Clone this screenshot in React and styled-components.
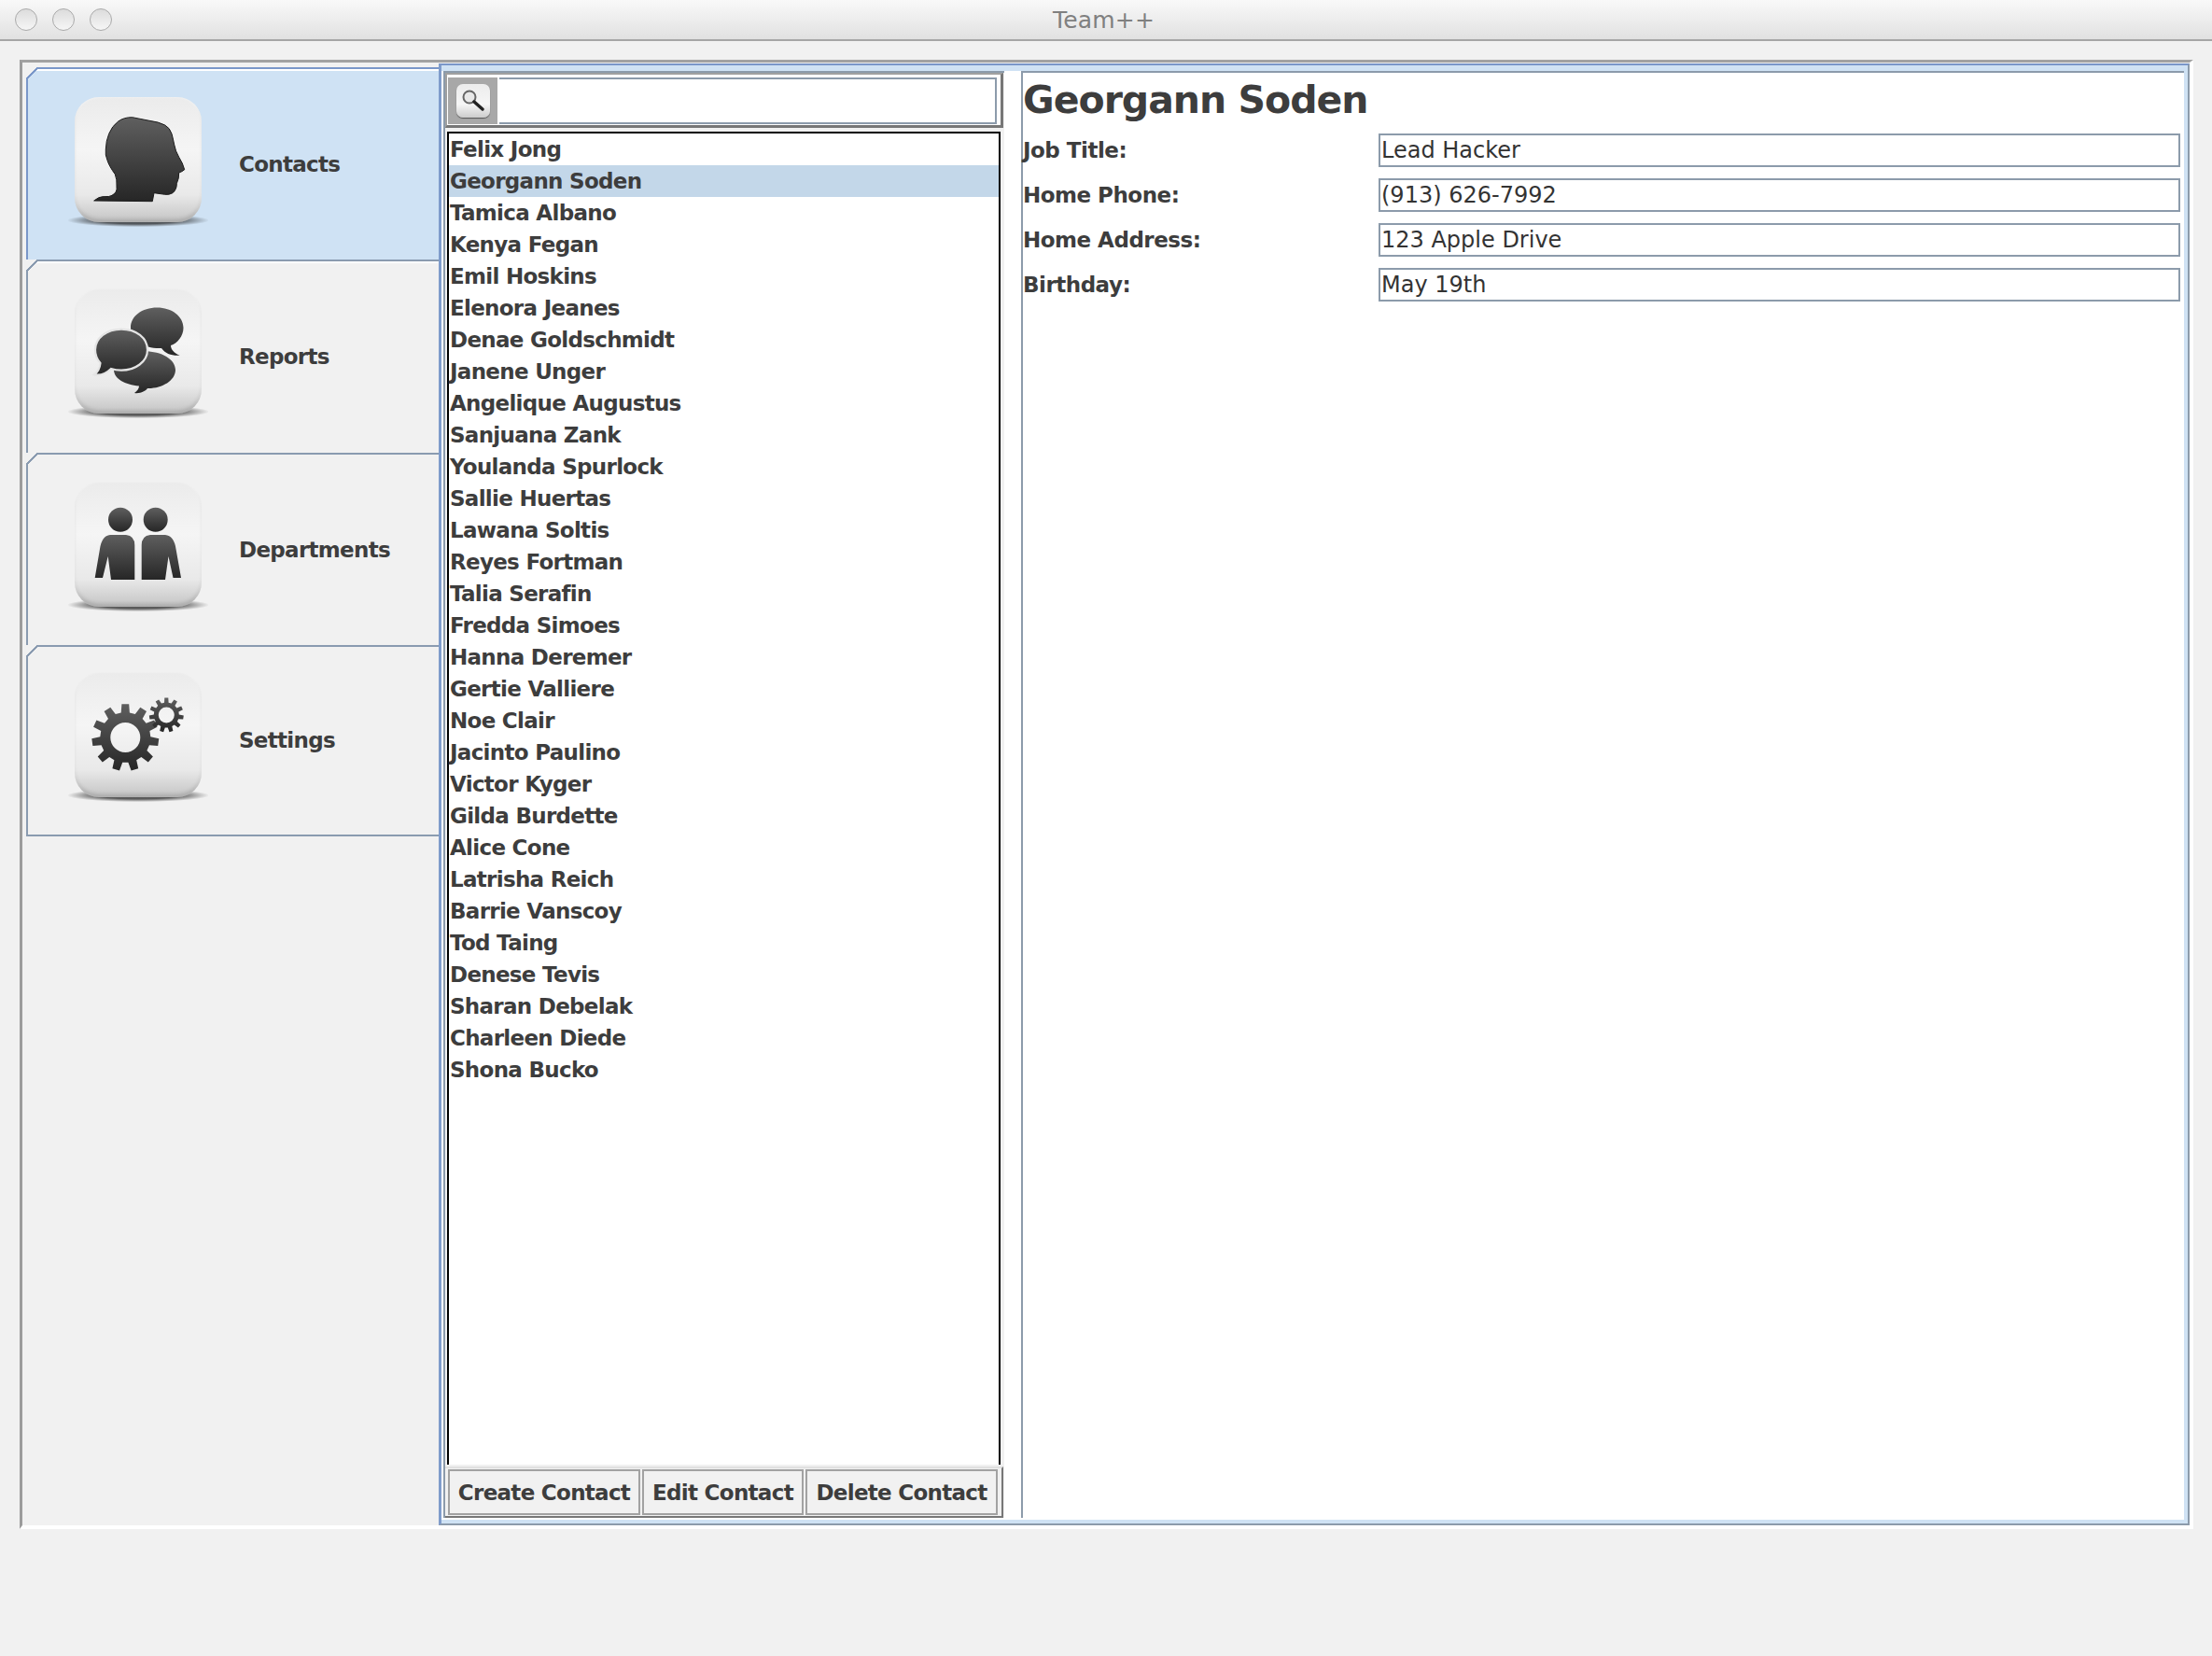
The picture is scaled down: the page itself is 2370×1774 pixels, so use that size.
import { Fragment } from "react";
import styled, { createGlobalStyle } from "styled-components";

const people = [
  "Felix Jong", "Georgann Soden", "Tamica Albano", "Kenya Fegan", "Emil Hoskins",
  "Elenora Jeanes", "Denae Goldschmidt", "Janene Unger", "Angelique Augustus", "Sanjuana Zank",
  "Youlanda Spurlock", "Sallie Huertas", "Lawana Soltis", "Reyes Fortman", "Talia Serafin",
  "Fredda Simoes", "Hanna Deremer", "Gertie Valliere", "Noe Clair", "Jacinto Paulino",
  "Victor Kyger", "Gilda Burdette", "Alice Cone", "Latrisha Reich", "Barrie Vanscoy",
  "Tod Taing", "Denese Tevis", "Sharan Debelak", "Charleen Diede", "Shona Bucko",
];

const fields = [
  ["Job Title:", "Lead Hacker"],
  ["Home Phone:", "(913) 626-7992"],
  ["Home Address:", "123 Apple Drive"],
  ["Birthday:", "May 19th"],
];

const Global = createGlobalStyle`
  html, body { margin: 0; padding: 0; background: #f1f1f1; }
  body { font-family: "DejaVu Sans", "Liberation Sans", sans-serif; color: #3d3d3d; }
`;

const Window = styled.div`
  width: 2370px;
  height: 1774px;
  display: flex;
  flex-direction: column;
  background: #f1f1f1;
  overflow: hidden;
`;

const TitleBar = styled.div`
  height: 42px;
  flex: none;
  display: flex;
  align-items: center;
  padding-left: 28px;
  gap: 16px;
  position: relative;
  background: linear-gradient(#f9f9f9, #e1e1e1);
  border-bottom: 2px solid #a6a6a6;
`;

const Light = styled.span`
  width: 24px;
  height: 24px;
  margin-left: ${(p) => (p.$first ? "-12px" : "0")};
  border-radius: 50%;
  box-sizing: border-box;
  border: 1.5px solid #aaaaaa;
  background: linear-gradient(#dcdcdc, #f6f6f6);
`;

const WindowTitle = styled.span`
  position: absolute;
  left: 0;
  right: 5px;
  text-align: center;
  font-size: 25px;
  letter-spacing: 0.2px;
  color: #808080;
`;

const TabbedPane = styled.div`
  margin: 20px 20px 0 21px;
  height: 1574px;
  flex: none;
  box-sizing: border-box;
  display: flex;
  border-top: 3px solid #a2a2a2;
  border-left: 3px solid #9c9c9c;
  border-right: 4px solid #ffffff;
  border-bottom: 4px solid #ffffff;
`;

const TabColumn = styled.div`
  width: 446px;
  flex: none;
  box-sizing: border-box;
  padding: 5px 0 0 4px;
`;

const Tab = styled.div`
  height: ${(p) => p.$height}px;
  box-sizing: border-box;
  position: relative;
  z-index: 0;
  display: flex;
  align-items: center;
  gap: 40px;
  padding-left: 50px;
  background: ${(p) => (p.$selected ? "#cfe2f4" : "#f1f1f1")};
  border-top: 2px solid ${(p) => (p.$selected ? "#7a97c9" : "#8a9bb0")};
  border-left: 2px solid ${(p) => (p.$selected ? "#7a97c9" : "#8a9bb0")};
  border-bottom: ${(p) => (p.$last ? "2px solid #8a9bb0" : "none")};
  box-shadow: ${(p) => (p.$lit ? "inset 0 2px 0 #ffffff" : "none")};

  &::before {
    content: "";
    position: absolute;
    left: -2px;
    top: -2px;
    width: 13px;
    height: 13px;
    background: linear-gradient(
      135deg,
      #f1f1f1 0 44%,
      ${(p) => (p.$selected ? "#7a97c9" : "#8a9bb0")} 44% 56%,
      transparent 56%
    );
  }
`;

const Tile = styled.div`
  width: 136px;
  height: 134px;
  flex: none;
  margin-bottom: ${(p) => p.$lift}px;
  position: relative;
  border-radius: 26px;
  background: linear-gradient(#ebebeb 0%, #f5f5f5 42%, #e9e9e9 78%, #c4c4c4 100%);
  box-shadow: inset 0 -4px 5px -2px rgba(0, 0, 0, 0.22), inset 0 0 3px rgba(255, 255, 255, 0.6);

  &::after {
    content: "";
    position: absolute;
    z-index: -1;
    left: -7px;
    right: -7px;
    bottom: -5px;
    height: 14px;
    background: radial-gradient(ellipse at center, rgba(40, 40, 40, 0.75) 40%, rgba(40, 40, 40, 0) 72%);
  }

  svg {
    display: block;
  }
`;

const TabLabel = styled.span`
  font-size: 23px;
  font-weight: 700;
  letter-spacing: -0.7px;
  margin-bottom: 1px;
`;

const ContentPane = styled.div`
  flex: 1;
  margin-top: 1px;
  min-width: 0;
  box-sizing: border-box;
  display: flex;
  padding: 6px 4px 4px 0;
  background: #cfe2f4;
  border-top: 2px solid #7a97c9;
  border-left: 3px solid #7f9ccb;
  border-right: 2px solid #8c9bab;
  border-bottom: 2px solid #8c9bab;
`;

const Split = styled.div`
  flex: 1;
  min-width: 0;
  display: flex;
  padding-left: 2px;
  padding-bottom: 2px;
  background: #ffffff;
`;

const LeftColumn = styled.div`
  width: 601px;
  flex: none;
  box-sizing: border-box;
  display: flex;
  flex-direction: column;
  background: #f1f1f1;
  border-top: 2px solid #8c9bab;
  border-left: 2px solid #8c9bab;
`;

const SearchBar = styled.div`
  height: 59px;
  width: 598px;
  flex: none;
  box-sizing: border-box;
  display: flex;
  gap: 2px;
  padding: 3px 4px 1px 1px;
  background: #ffffff;
  border-top: 2px solid #a0a0a0;
  border-left: 2px solid #a0a0a0;
  border-right: 3px solid #777777;
  border-bottom: 3px solid #777777;
`;

const SearchWell = styled.div`
  width: 53px;
  flex: none;
  display: flex;
  align-items: center;
  justify-content: center;
  background: #a8a8a8;
`;

const SearchTile = styled.div`
  width: 36px;
  height: 36px;
  border-radius: 7px;
  background: linear-gradient(#ececec, #f6f6f6 60%, #cccccc);
  box-shadow: 0 1px 1px rgba(0, 0, 0, 0.5);
`;

const SearchInput = styled.input`
  flex: 1;
  min-width: 0;
  box-sizing: border-box;
  background: #ffffff;
  border: 2px solid #8c9bab;
  border-left: none;
  outline: none;
`;

const List = styled.div`
  flex: 1;
  margin: 4px 4px 2px 2px;
  min-height: 0;
  background: #ffffff;
  border: 2px solid #000000;
  border-bottom: none;
`;

const Row = styled.div`
  height: 34px;
  padding-left: 1px;
  display: flex;
  align-items: center;
  font-size: 23px;
  font-weight: 700;
  letter-spacing: -0.7px;
  white-space: nowrap;
  background: ${(p) => (p.$selected ? "#c3d7e9" : "transparent")};
`;

const ButtonBar = styled.div`
  height: 55px;
  width: 598px;
  flex: none;
  box-sizing: border-box;
  display: flex;
  gap: 2px;
  padding: 1px 3px 1px 3px;
  border-top: 2px solid #e0e0e0;
  border-right: 2px solid #777777;
  border-bottom: 2px solid #777777;
`;

const ActionButton = styled.button`
  width: ${(p) => p.$width}px;
  height: 49px;
  flex: none;
  box-sizing: border-box;
  padding: 0;
  background: #f1f1f1;
  border: 2px solid #a2a2a2;
  font-family: inherit;
  font-size: 23px;
  font-weight: 700;
  letter-spacing: -0.7px;
  color: #3d3d3d;
`;

const Detail = styled.div`
  flex: 1;
  min-width: 0;
  margin-left: 18px;
  box-sizing: border-box;
  background: #ffffff;
  border-top: 2px solid #8c9bab;
  border-left: 2px solid #8c9bab;
  padding: 0 4px 0 0;
`;

const Heading = styled.h1`
  margin: 0;
  height: 65px;
  line-height: 58px;
  font-size: 41px;
  font-weight: 700;
  letter-spacing: -1px;
  white-space: nowrap;
`;

const FieldGrid = styled.div`
  display: grid;
  grid-template-columns: 381px 1fr;
  row-gap: 12px;
  align-items: center;
`;

const FieldLabel = styled.span`
  font-size: 23px;
  font-weight: 700;
  letter-spacing: -0.5px;
`;

const FieldBox = styled.div`
  height: 36px;
  box-sizing: border-box;
  display: flex;
  align-items: center;
  padding-left: 1px;
  border: 2px solid #8c9bab;
  font-size: 24px;
  color: #333333;
`;

const INK = "url(#ink)";

// gear outline with square teeth, as one path with the hole cut out
const gearPath = (cx, cy, outer, root, hole, teeth) => {
  const pts = [];
  const step = (Math.PI * 2) / teeth;
  for (let i = 0; i < teeth; i++) {
    const a = i * step - Math.PI / 2;
    const w = step * 0.24;
    [[a - w * 1.25, root], [a - w * 0.8, outer], [a + w * 0.8, outer], [a + w * 1.25, root]].forEach(([t, r]) => {
      pts.push(`${(cx + Math.cos(t) * r).toFixed(1)} ${(cy + Math.sin(t) * r).toFixed(1)}`);
    });
  }
  const ring = `M${cx - hole} ${cy}a${hole} ${hole} 0 1 0 ${hole * 2} 0a${hole} ${hole} 0 1 0 ${-hole * 2} 0Z`;
  return `M${pts.join("L")}Z${ring}`;
};

const TileSvg = ({ children }) => (
  <svg width="136" height="134" viewBox="0 0 136 134">
    <defs>
      <linearGradient id="ink" x1="0" y1="0" x2="0" y2="1">
        <stop offset="0" stopColor="#5f5f5f" />
        <stop offset="1" stopColor="#262626" />
      </linearGradient>
    </defs>
    {children}
  </svg>
);

const HeadIcon = () => (
  <TileSvg>
    <path
      fill={INK}
      stroke="#1c1c1c"
      strokeWidth="1"
      d="M20.7 111 Q26 106.7 30 106.7 Q38 107 40 105.3 Q46 102 45 96 Q45.5 88 43.3 82.7 Q37 74 35 67.7 Q32.5 62 33.3 56 Q33.5 47 36.7 39.3 Q40 31 46.7 26 Q53 21.5 61.7 21.7 Q71 23.5 80 25.3 Q90 26.5 96.7 30 Q102 33 104 39.3 Q105.5 45 106.7 51 Q108 58 111.7 64.3 Q116 71 117.7 77.7 Q115 80 111.7 81 Q112 87 109.3 92.7 Q109.5 99 105 102.7 Q101 105 96.7 104.3 L85 102.7 L83.3 111.7 Z"
    />
  </TileSvg>
);

const BubblesIcon = () => (
  <TileSvg>
    <path fill={INK} d="M60 42 C60 30 72 20.6 88.3 20.6 C104 20.6 116.5 30 116.5 42.3 C116.5 51 110 59 103 61 C103 65 106 69 112.7 71.7 C105 72.5 97 70 93 64 C76 65 60 56 60 42Z" />
    <path fill={INK} d="M42 87 C42 76 57 67.3 75 67.3 C93 67.3 108 76 108 87.3 C108 99 93 107.5 78 107 C76 110 70 113 64 112 C67 110 69 107 69 104.5 C54 103 42 97 42 87Z" />
    <path fill={INK} stroke="#e4e4e4" strokeWidth="2.2" d="M22 65.7 C22 53 34.5 43.7 50 43.7 C66 43.7 78 53 78 65.7 C78 78.5 65 87.7 50 87.7 C46 87.7 42 87 39 86 C35 90 28 93.5 21 92.3 C25 89.5 27 85 27.5 80 C24 76 22 71 22 65.7Z" />
  </TileSvg>
);

const PeopleIcon = () => (
  <TileSvg>
    <circle cx="49" cy="40.7" r="13" fill={INK} />
    <circle cx="86.7" cy="40.7" r="13" fill={INK} />
    <path fill={INK} d="M38 57 H55 Q64.3 58 64.3 68 V105 H39 L35.7 80 L30 103 L21.7 103 L27 72 Q29 58 38 57Z" />
    <path fill={INK} d="M97 57 H81 Q71.7 58 71.7 68 V105 H97 L100.5 80 L105.5 103 L114 103 L108.5 72 Q106.5 58 97 57Z" />
  </TileSvg>
);

const GearsIcon = () => (
  <TileSvg>
    <path fill={INK} fillRule="evenodd" d={gearPath(54.3, 70, 36, 27, 16, 11)} />
    <path fill={INK} fillRule="evenodd" d={gearPath(98.3, 46, 18.5, 13.5, 8.5, 11)} />
  </TileSvg>
);

const tabs = [
  { name: "Contacts", Icon: HeadIcon, height: 206, lift: 10 },
  { name: "Reports", Icon: BubblesIcon, height: 207, lift: 13 },
  { name: "Departments", Icon: PeopleIcon, height: 206, lift: 13 },
  { name: "Settings", Icon: GearsIcon, height: 205, lift: 13 },
];

const App = () => {
  return (
    <Window>
      <Global />
      <TitleBar>
        <Light $first />
        <Light />
        <Light />
        <WindowTitle>Team++</WindowTitle>
      </TitleBar>
      <TabbedPane>
        <TabColumn>
          {tabs.map(({ name, Icon, height, lift }, i) => (
            <Tab key={name} $height={height} $selected={i === 0} $lit={i < 2} $last={i === 3}>
              <Tile $lift={lift}>
                <Icon />
              </Tile>
              <TabLabel>{name}</TabLabel>
            </Tab>
          ))}
        </TabColumn>
        <ContentPane>
          <Split>
            <LeftColumn>
              <SearchBar>
                <SearchWell>
                  <SearchTile>
                    <svg width="36" height="36" viewBox="0 0 36 36">
                      <circle cx="14" cy="14" r="6.5" fill="#e8e8e8" stroke="#666666" strokeWidth="2" />
                      <path d="M19 19 L28 27" stroke="#222222" strokeWidth="3.4" strokeLinecap="round" />
                    </svg>
                  </SearchTile>
                </SearchWell>
                <SearchInput />
              </SearchBar>
              <List>
                {people.map((name) => (
                  <Row key={name} $selected={name === "Georgann Soden"}>{name}</Row>
                ))}
              </List>
              <ButtonBar>
                <ActionButton $width={206}>Create Contact</ActionButton>
                <ActionButton $width={173}>Edit Contact</ActionButton>
                <ActionButton $width={206}>Delete Contact</ActionButton>
              </ButtonBar>
            </LeftColumn>
            <Detail>
              <Heading>Georgann Soden</Heading>
              <FieldGrid>
                {fields.map(([label, value]) => (
                  <Fragment key={label}>
                    <FieldLabel>{label}</FieldLabel>
                    <FieldBox>{value}</FieldBox>
                  </Fragment>
                ))}
              </FieldGrid>
            </Detail>
          </Split>
        </ContentPane>
      </TabbedPane>
    </Window>
  );
};

export default App;
